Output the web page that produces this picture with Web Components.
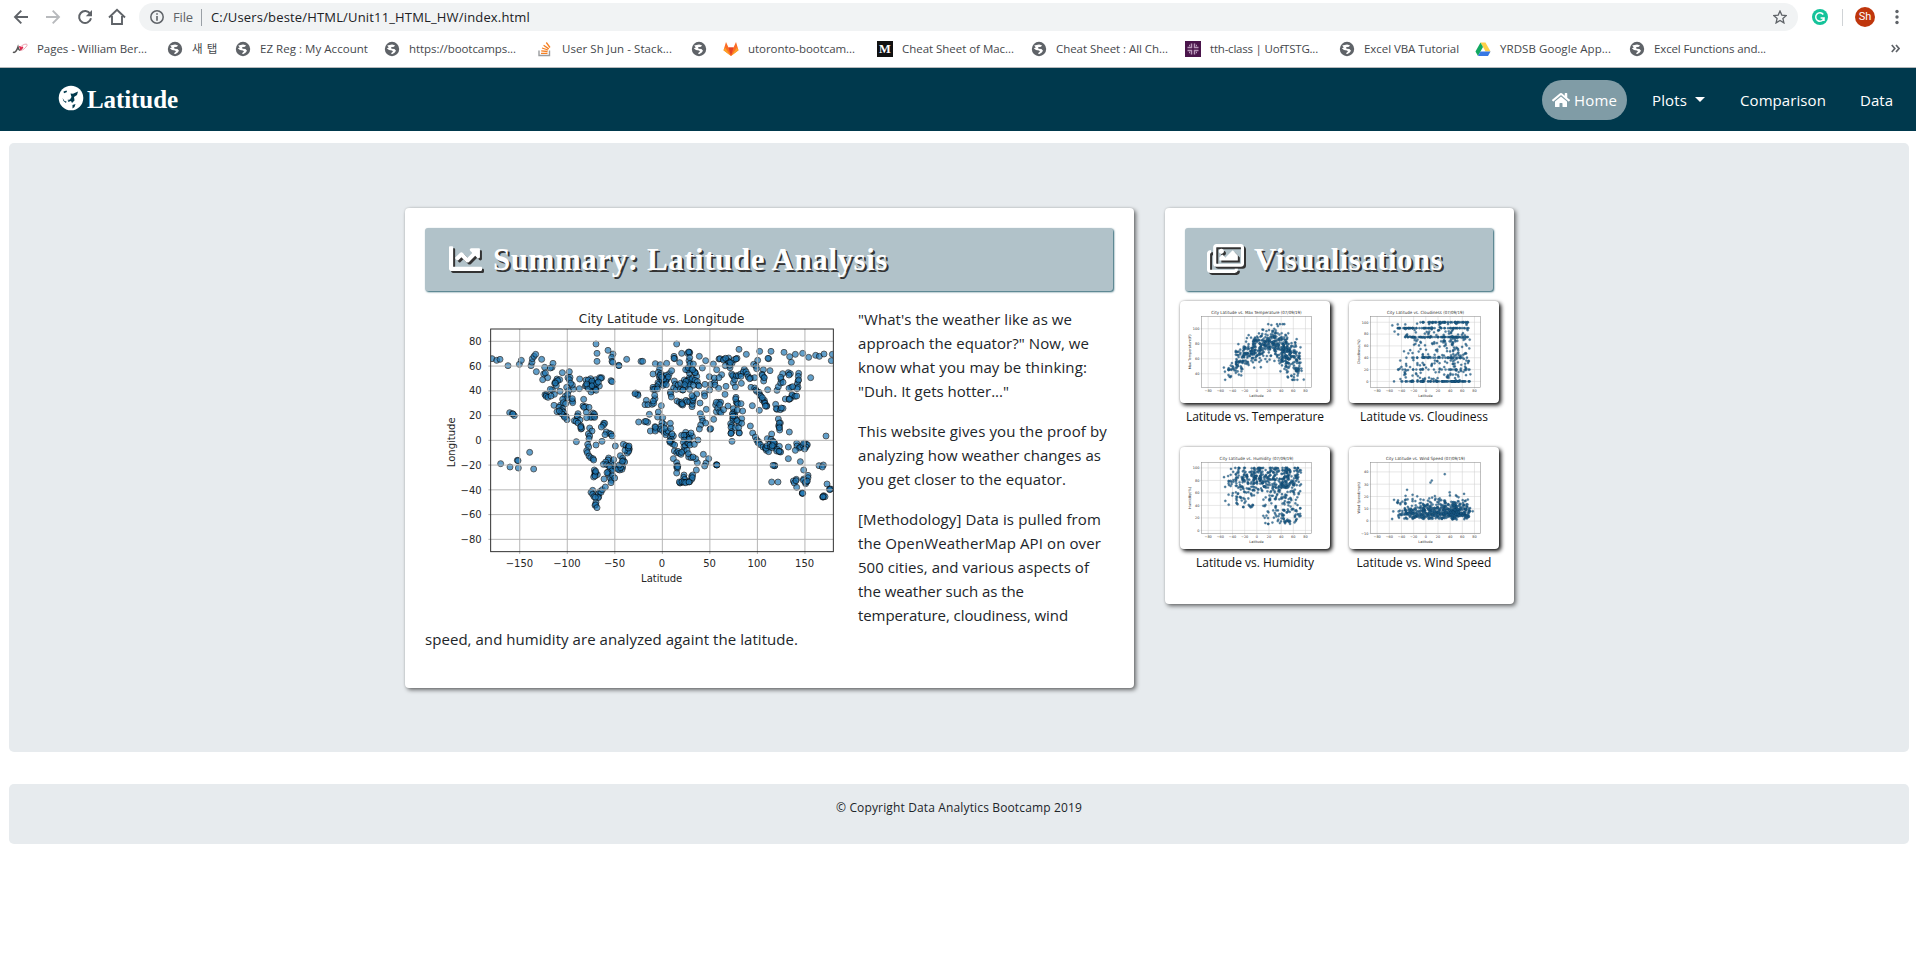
<!DOCTYPE html>
<html lang="en">
<head>
<meta charset="utf-8">
<title>Latitude</title>
<style>
body{margin:0;background:#fff;color:#212529;font-family:"Open Sans","Noto Sans","Noto Sans CJK KR",sans-serif;font-size:15px;overflow:hidden}
</style>
</head>
<body>
<app-window></app-window>

<template id="t-window">
<style>:host{display:block;height:974px}main{display:block;padding:12px 7px 0 9px}
.cols{display:grid;grid-template-columns:729px 349px;column-gap:31px;align-items:start;justify-content:start;padding-left:396px}
.jumbo{background:#e7ebee;border-radius:5px;height:544px;padding-top:65px}
footer{background:#e7ebee;border-radius:5px;height:60px;margin-top:32px;display:flex;justify-content:center;font-size:12px;line-height:48px;color:#212529}
p{margin:0 0 16px;line-height:24px}
p fit-text{display:block}
.grid{display:grid;grid-template-columns:150px 150px;column-gap:19px;row-gap:26px;margin:10px 0 0 -5px}
</style>
<browser-bar></browser-bar>
<bookmark-bar></bookmark-bar>
<site-nav></site-nav>
<main>
<section class="jumbo"><div class="cols">
<info-card style="--h:480px">
<card-title w="395"><svg slot="icon" width="33" height="33" viewBox="0 0 512 512" fill="#fff"><path d="M496 384H64V80c0-8.84-7.16-16-16-16H16C7.16 64 0 71.16 0 80v336c0 17.67 14.33 32 32 32h464c8.84 0 16-7.16 16-16v-32c0-8.84-7.16-16-16-16zM464 96H345.94c-21.38 0-32.09 25.85-16.97 40.97l32.4 32.4L288 242.75l-73.37-73.37c-12.5-12.5-32.76-12.5-45.25 0l-68.69 68.69c-6.25 6.25-6.25 16.38 0 22.63l22.62 22.62c6.25 6.25 16.38 6.25 22.63 0L192 237.25l73.37 73.37c12.5 12.5 32.76 12.5 45.25 0l96-96 32.4 32.4c15.12 15.12 40.97 4.41 40.97-16.97V112c.01-8.84-7.15-16-15.99-16z"/></svg>Summary: Latitude Analysis</card-title>
<world-plot style="margin-top:17px"></world-plot>
<div style="padding-top:16px">
<p><fit-text w="214">"What's the weather like as we</fit-text><fit-text w="231">approach the equator?" Now, we</fit-text><fit-text w="229">know what you may be thinking:</fit-text><fit-text w="151">"Duh. It gets hotter..."</fit-text></p>
<p><fit-text w="249">This website gives you the proof by</fit-text><fit-text w="243">analyzing how weather changes as</fit-text><fit-text w="208">you get closer to the equator.</fit-text></p>
<p><fit-text w="243">[Methodology] Data is pulled from</fit-text><fit-text w="243">the OpenWeatherMap API on over</fit-text><fit-text w="231">500 cities, and various aspects of</fit-text><fit-text w="166">the weather such as the</fit-text><fit-text w="210">temperature, cloudiness, wind</fit-text><fit-text w="373" style="clear:left">speed, and humidity are analyzed againt the latitude.</fit-text></p>
</div>
</info-card>
<info-card style="--h:396px">
<card-title w="189" style="padding-left:22px;gap:10px"><svg slot="icon" width="37" height="33" viewBox="0 0 576 512" fill="#fff"><path d="M480 416v16c0 26.51-21.49 48-48 48H48c-26.51 0-48-21.49-48-48V176c0-26.51 21.49-48 48-48h16v48H54a6 6 0 0 0-6 6v244a6 6 0 0 0 6 6h372a6 6 0 0 0 6-6v-10h48zm42-336H150a6 6 0 0 0-6 6v244a6 6 0 0 0 6 6h372a6 6 0 0 0 6-6V86a6 6 0 0 0-6-6zm6-48c26.51 0 48 21.49 48 48v256c0 26.51-21.49 48-48 48H144c-26.51 0-48-21.49-48-48V80c0-26.51 21.49-48 48-48h384zM264 144c0 22.091-17.909 40-40 40s-40-17.909-40-40 17.909-40 40-40 40 17.909 40 40zm-72 96l39.515-39.515c4.686-4.686 12.284-4.686 16.971 0L288 240l103.515-103.515c4.686-4.686 12.284-4.686 16.971 0L480 208v80H192v-48z"/></svg>Visualisations</card-title>
<div class="grid">
<plot-thumb kind="temp"><fit-text w="138">Latitude vs. Temperature</fit-text></plot-thumb>
<plot-thumb kind="cloud"><fit-text w="128">Latitude vs. Cloudiness</fit-text></plot-thumb>
<plot-thumb kind="humid"><fit-text w="118">Latitude vs. Humidity</fit-text></plot-thumb>
<plot-thumb kind="wind"><fit-text w="135">Latitude vs. Wind Speed</fit-text></plot-thumb>
</div>
</info-card>
</div></section>
<footer><fit-text w="246">© Copyright Data Analytics Bootcamp 2019</fit-text></footer>
</main>
</template>

<template id="t-browser">
<style>:host{display:flex;height:31px;padding:3px 0 0;align-items:flex-start;box-sizing:border-box;background:#fff}
.nav{display:flex;width:139px;height:28px;align-items:center;padding-left:13px;box-sizing:border-box;gap:16px}
.omni{display:flex;align-items:center;width:1659px;height:28px;background:#f1f3f4;border-radius:14px;box-sizing:border-box;padding:0 11px;font-size:13px;color:#202124}
.omni i{width:1px;height:17px;background:#9aa0a6;margin:0 9px 0 8px}
.file{color:#5f6368;margin-left:9px}.star{margin-left:auto}
.end{display:flex;align-items:center;height:28px}
.av{width:20px;height:20px;border-radius:50%;background:#bf360c;color:#fff;font:11px/20px Roboto,sans-serif;text-align:center}
svg{display:block;flex:none}
</style>
<div class="nav"><svg width="16" height="16" viewBox="0 0 16 16" fill="none" stroke="#5f6368" stroke-width="1.900"><path d="M15 8H2.200M8.300 1.600 2 8l6.300 6.400"/></svg><svg width="16" height="16" viewBox="0 0 16 16" fill="none" stroke="#b8babd" stroke-width="1.900"><path d="M1 8h12.800M7.700 1.600 14 8l-6.300 6.400"/></svg><svg width="16" height="16" viewBox="0 0 16 16" fill="none" stroke="#5f6368" stroke-width="2"><path d="M13.200 4.800A6 6 0 1 0 14 9.300"/><path d="M15 1v6.200H8.800z" fill="#5f6368" stroke="none"/></svg><svg style="margin-left:-1px" width="18" height="18" viewBox="0 0 18 18" fill="none" stroke="#5f6368" stroke-width="1.900"><path d="M1 9.500 9 1.800l8 7.700M4 8v8h10V8"/></svg></div>
<div class="omni"><svg width="14" height="14" viewBox="0 0 14 14"><circle cx="7" cy="7" r="6.200" fill="none" stroke="#5f6368" stroke-width="1.500"/><path d="M6.200 3.200h1.600v1.600H6.200zM6.200 6h1.600v4.800H6.200z" fill="#5f6368"/></svg><fit-text w="20" class="file">File</fit-text><i></i><fit-text w="319">C:/Users/beste/HTML/Unit11_HTML_HW/index.html</fit-text><svg class="star" width="14" height="14" viewBox="0 0 14 14" fill="none" stroke="#5f6368" stroke-width="1.300"><path d="m7 1 1.800 4.100 4.500.400-3.400 3 1 4.400L7 10.500l-3.900 2.400 1-4.400-3.400-3 4.500-.400z"/></svg></div>
<div class="end"><svg style="margin-left:14px" width="16" height="16" viewBox="0 0 16 16"><circle cx="8" cy="8" r="8" fill="#15c39a"/><path d="M11.300 5.500A4.200 4.200 0 1 0 12 9H8.600M12 9v3" fill="none" stroke="#fff" stroke-width="1.500"/></svg><i style="width:1px;height:17px;background:#d0d3d6;margin:0 12px 0 14px"></i><span class="av">Sh</span><svg style="margin-left:20px" width="4" height="16" viewBox="0 0 4 16" fill="#5f6368"><circle cx="2" cy="2.500" r="1.700"/><circle cx="2" cy="8" r="1.700"/><circle cx="2" cy="13.500" r="1.700"/></svg></div>
</template>

<template id="t-nav">
<style>:host{display:flex;height:63px;background:#00394d;color:#fff;align-items:center;box-sizing:border-box}
.brand{display:flex;align-items:center;font:bold 25px "Liberation Serif",serif;margin-left:58px;gap:3px}
.links{display:flex;align-items:center;margin-left:auto;padding-right:23px}
.pill{display:flex;align-items:center;gap:4px;background:#809ca6;border-radius:20px;height:40px;width:85px;box-sizing:border-box;padding-left:10px;margin-right:25px}
.caret{border:5px solid transparent;border-top-color:#fff;border-bottom:0;margin:0 35px 0 8px}
svg{display:block}
</style>
<div class="brand"><svg style="margin-top:-3px" width="26" height="26" viewBox="0 0 26 26"><circle cx="13" cy="13" r="12.300" fill="#fff"/><path d="m5.500 6.500 3-1 .500 1.500-3 1.200zM12.500 8.500l2.500.300 5-2.300-1 3.500-3 2 .500 3.500-2.500 2.500-1-2-3 1 .500-1.500-1.500-.500 3-.500 1.500-2.500zM4.500 13l2 3 2 .500-.500 1.500-2.500-2zM14.500 20l3-1-1 3-2 1.500z" fill="#00394d"/></svg><fit-text w="91">Latitude</fit-text></div>
<div class="links"><span class="pill"><svg width="18" height="16" viewBox="0 0 576 512" fill="#fff"><path d="M280.370 148.260L96 300.110V464a16 16 0 0 0 16 16l112.060-.290a16 16 0 0 0 15.920-16V368a16 16 0 0 1 16-16h64a16 16 0 0 1 16 16v95.640a16 16 0 0 0 16 16.050L464 480a16 16 0 0 0 16-16V300L295.670 148.260a12.190 12.190 0 0 0-15.300 0zM571.600 251.470L488 182.560V44.050a12 12 0 0 0-12-12h-56a12 12 0 0 0-12 12v72.610L318.470 43a48 48 0 0 0-61 0L4.340 251.470a12 12 0 0 0-1.600 16.900l25.500 31A12 12 0 0 0 45.150 301l235.220-193.740a12.190 12.190 0 0 1 15.300 0L530.900 301a12 12 0 0 0 16.900-1.600l25.500-31a12 12 0 0 0-1.700-16.930z"/></svg><fit-text w="43">Home</fit-text></span><fit-text w="35">Plots</fit-text><span class="caret"></span><fit-text w="86" style="margin-right:34px">Comparison</fit-text><fit-text w="33">Data</fit-text></div>
</template>

<script>
class Base extends HTMLElement{
  mount(html){ if(!this.shadowRoot){ this.attachShadow({mode:'open'}).append(html.content ? html.content.cloneNode(true) : document.createRange().createContextualFragment(html)); } }
}
const tpl=id=>document.getElementById(id);

const globe='<circle cx="8" cy="8" r="7.200" fill="#5f6368"/><path d="M3.200 4.500 8 3.500l3 .800-1 1.500-3 .500.500 1.500 3 .200 1.500 1.700-1.500 2-2.500 1.500-1-1 2-1.700-1-1L5 9 2.800 7.300l2-.800z" fill="#fff"/>';
const icons={
 globe,
 wb:'<path d="M1 11c2 1.500 4-2 5-5 1 4 2 4 4 1" fill="none" stroke="#555" stroke-width="1.500"/><path d="M7 5.500c1-1 2 0 2 1 1-2 3-1 2 .500L8.500 9.500z" fill="#e2244b"/><path d="M9 5.500c3-3 7-3 6-1s-4 5-7 5" fill="none" stroke="#e98a9c" stroke-width=".8"/>',
 so:'<path d="M2 9.500v5h10.500v-5" fill="none" stroke="#9a9c9f" stroke-width="1.400"/><path d="M4 12.300h6.500M4.200 9.800l6.400.700M5 7l6 2M6.600 4.200l5.200 3.700M9.300 1.500l3.700 5" fill="none" stroke="#f48024" stroke-width="1.300"/>',
 gitlab:'<path d="M8 15 .500 9.300 3 1l2.500 5.500h5L13 1l2.500 8.300z" fill="#fc6d26"/><path d="M8 15 5.500 6.500h5z" fill="#e24329"/><path d="M8 15 .500 9.300 2 6.500zM8 15l7.500-5.700L14 6.500z" fill="#fca326"/>',
 medium:'<rect width="16" height="16" fill="#111"/><text x="8" y="12.300" text-anchor="middle" font-family="Liberation Serif,serif" font-weight="bold" font-size="12.500" fill="#fff">M</text>',
 slack:'<rect width="16" height="16" fill="#4a154b"/><path d="M6.500 2.500v4h-4M9.500 2.500v4h4M6.500 13.500v-4h-4M9.500 13.500v-4h4M4 4.500h1M11 4.500h1M4 11.500h1M11 11.500h1" fill="none" stroke="#b897b9" stroke-width="1.500"/>',
 drive:'<path d="M5.500 1.500h5l5 9h-5z" fill="#ffcf48"/><path d="M5.500 1.500 8 6l-5 9-2.500-4.500z" fill="#11a861"/><path d="M5.500 10.500h10L13 15H3z" fill="#3777e3"/>'};
customElements.define('bookmark-item',class extends Base{
 connectedCallback(){const w=this.getAttribute('w');
  this.mount(`<style>:host{display:flex;align-items:center;gap:9px;flex:none}svg{display:block;flex:none}fit-text{margin-top:-1px}</style><svg width="16" height="16" viewBox="0 0 16 16">${icons[this.getAttribute('icon')]}</svg>`+(w?`<fit-text w="${w}">${this.getAttribute('label')}</fit-text>`:''));}
});
customElements.define('bookmark-bar',class extends Base{
 connectedCallback(){
  const b=[['wb',155,110,'Pages - William Ber...'],['globe',68,26,'새 탭'],['globe',149,108,'EZ Reg : My Account'],['globe',153,107,'https://bootcamps...'],['so',154,110,'User Sh Jun - Stack...'],['globe',32,0,''],['gitlab',154,107,'utoronto-bootcam...'],['medium',154,112,'Cheat Sheet of Mac...'],['globe',154,112,'Cheat Sheet : All Ch...'],['slack',154,108,'tth-class | UofTSTG...'],['globe',136,95,'Excel VBA Tutorial'],['drive',154,111,'YRDSB Google App...'],['globe',154,112,'Excel Functions and...']];
  this.mount(`<style>:host{display:flex;height:37px;box-sizing:border-box;border-bottom:1px solid #b6b9bb;align-items:center;padding:0 16px 1px 12px;font-size:11.500px;color:#45484c;background:#fff}.more{margin-left:auto}</style>`+b.map(i=>`<bookmark-item style="width:${i[1]}px" icon="${i[0]}" w="${i[2]||''}" label="${i[3]}"></bookmark-item>`).join('')+'<svg class="more" width="9" height="9" viewBox="0 0 9 9" fill="none" stroke="#5f6368" stroke-width="1.700"><path d="m.800 1 3 3.500-3 3.500M5 1l3 3.500L5 8"/></svg>');}
});
customElements.define('browser-bar',class extends Base{connectedCallback(){this.mount(tpl('t-browser'));}});
customElements.define('site-nav',class extends Base{connectedCallback(){this.mount(tpl('t-nav'));}});
customElements.define('info-card',class extends Base{connectedCallback(){this.mount(`<style>:host{display:block;box-sizing:border-box;height:var(--h);background:#fff;border-radius:4px;padding:20px 21px 20px 20px;box-shadow:2px 2px 4px rgba(0,0,0,.550),0 0 2px rgba(0,0,0,.150)}</style><slot></slot>`);}});
customElements.define('card-title',class extends Base{connectedCallback(){this.mount(`<style>:host{display:flex;align-items:center;gap:11px;height:63px;box-sizing:border-box;padding-left:24px;background:#b1c2c9;border-radius:3px;box-shadow:1px 1px 2px #27606f;color:#fff;font:bold 31px "Liberation Serif",serif;text-shadow:2px 2px 0 #333;letter-spacing:0}::slotted(svg){filter:drop-shadow(2px 2px 0 #333);display:block;flex:none;margin-top:-2px}</style><slot name="icon"></slot><fit-text w="${this.getAttribute('w')}">${this.textContent.trim()}</fit-text>`);}});

/* city markers, in plot pixels: x = 697 + 2.85*lon, y = 421 - 3.71*lat */
const pts=`186,176 200,181 210,178 234,197 268,193 274,181 303,197 306,187 307,176 312,169 317,163 335,178 319,215 344,202 366,202 369,190 361,204 498,132 501,160 501,184 534,151 549,162 545,172 546,184 548,187 566,196 567,197 590,178 633,184 638,184
338,239 341,222 353,233 346,219 397,218 418,215 381,237 377,245 374,250 389,239 383,242 414,233 420,232 418,239 449,237 468,240 482,236 497,239 509,233 515,233 512,235 543,242 546,245 466,258 470,258 483,247 489,249 493,256 481,258 497,262 508,258 488,270 483,276 475,266 448,266 430,267 427,255 422,250 410,262 416,272 390,274 367,270 373,283 379,257 376,249 345,284 349,284 348,289 354,292 363,288 361,268 496,267 491,251 475,240 486,243 486,257 500,250 505,246 498,271 470,252
406,289 412,293 398,298 413,283 427,303 428,308 427,296 461,298 372,316 391,316 400,308 407,311 387,322 398,326 396,332 381,335 393,338 400,336 408,349 402,348 411,359 396,342 404,352 388,333 459,318 467,320 462,322 477,322 469,337 489,339 494,347 493,342 490,351 485,351 482,352 470,353 494,352 444,341 442,352 442,348 450,360 433,362 438,364 444,369 453,378 453,387 455,385 452,381 479,384 486,393 475,402 479,408 477,416 521,370 524,370 520,376 514,381 529,396 538,400 543,402 546,408 525,404 516,424 498,435 473,433 476,441 470,452 472,458 477,468 482,473 489,476 491,480
439,425 556,438 580,433 588,437 595,441 598,447 595,452 592,459 596,454 585,451 595,444 597,438 571,467 578,475 580,482 584,486 575,493 578,501 576,508 569,510 562,504 557,504 550,496 547,506 543,488 551,479 536,474 534,480 527,486 520,493 530,494 537,497 540,503 545,513 534,516 535,523 531,518 541,535 545,541 543,548 548,527 554,534 522,537 564,508 572,503 568,495 577,484 493,510 495,517 494,524 502,524 496,519 491,531 495,528 497,514
488,571 483,577 488,583 492,590 506,590 505,582 509,575 513,577 517,569 526,561 498,607 495,616 497,614 501,623 505,593 496,592 239,338 247,341 253,347 249,342 212,491 240,501 262,481 264,482 265,504 299,457 311,507
740,132 773,160 755,160 778,157 779,158 776,156 732,169 734,176 732,175 749,188 777,182 779,173 808,169 827,182 850,192 817,204 867,177 870,176 883,177 880,180 896,174 894,183 906,190 913,179 921,175 918,177 887,175 897,188 900,203 886,197 899,196 901,188 927,148 949,163 989,154 1023,154 1016,176 1014,175 1062,157 1096,163 1118,160 1136,172 1157,166 1168,169 1182,162 1207,163 1204,182 1079,170 1084,187 971,193 983,181
676,191 691,194 689,206 710,190 669,222 685,217 692,221 688,231 690,226 692,239 684,248 686,253 680,260 669,262 669,268 674,268 682,267 698,236 703,228 706,240 703,251 696,242 702,249 711,233 718,221 725,212 709,226 712,237 707,243 699,256 709,254 702,236 715,231 695,231 733,243 736,253 731,264 721,276 722,281 724,291 739,268 744,255 751,267 758,270 752,250 763,240 766,248 772,248 775,240 778,233 782,240 784,246 779,239 768,259 776,253 768,244 787,236 778,219 773,210 767,209 775,203 786,208 780,191 790,192 793,215 796,219 800,229 795,241 802,245 804,255 807,258 795,218 788,209 790,256 764,254 825,253 823,280 824,288 843,253 839,270 838,230 854,246 855,255 853,234 860,209 875,224 867,233 866,265 888,259 910,248 911,230 905,222 908,227 914,239 916,261 919,227 925,227 932,222 943,208 940,216 948,215 952,223 955,231 962,234 974,233 959,236 933,229 934,250 978,198 980,206 1000,209 996,223 1001,232 1001,243 1020,212 997,226 1003,233
741,303 748,307 755,306 754,313 758,315 757,311 768,301 772,305 779,305 786,320 787,313 789,303 788,299 800,282 791,293 786,287 759,270 779,268
617,279 623,282 624,286 615,281 649,301 645,314 654,314 666,313 671,310 675,296 674,286 670,303 694,317 658,343 626,366 644,365 653,367 648,364 661,393 675,380 678,388 676,393 685,336 683,351 698,353 702,373 696,368 693,379 691,388 697,391 702,397 707,404 709,397 714,393 722,385 721,370 704,385 676,382 721,412 730,408 724,418 722,425 728,432 720,427 734,435 719,423 726,402 755,406 767,397 768,406 768,412 777,405 779,412 787,409 783,399 762,406 763,420 760,427 762,440 766,437 773,429 776,430 780,435 793,433 804,420 777,418
733,453 740,458 744,454 748,460 753,463 762,452 755,457 771,451 776,471 783,473 775,461 730,476 740,488 743,497 740,500 742,505 743,500 740,519 762,525 761,532 764,538 752,548 750,549 748,546 756,545 762,547 773,545 779,545 785,538 785,529 788,525 799,510 802,488 797,476 789,471 820,463 828,489 824,498 836,476 860,495 859,494 861,495 767,548 777,546 787,533
816,353 818,363 812,375 827,369 808,387 840,388 842,386 851,358 829,328 811,341 810,309 857,315 866,307 872,307 859,335 863,324 869,335 873,338 881,329 894,318 885,283 918,292 919,307 921,308 923,311 933,311 917,297 910,326 911,337 914,341 907,342 908,355 909,361 902,371 905,377 903,382 905,395 903,400 903,400 906,424 917,356 914,348 922,330 938,333 935,356 927,368 935,370 921,362 927,398 928,399 916,383 926,383 909,348 859,307 869,314
963,262 974,264 978,270 980,274 987,277 990,285 993,289 997,300 1003,301 1003,307 1005,310 1010,317 1010,319 1006,318 997,293 967,317 988,331 1013,269 1041,271 1045,260 1052,249 1053,238 1059,247 1058,221 1052,232 1075,218 1081,221 1077,225 1106,220 1105,229 1104,243 1102,252 1104,262 1101,266 1083,262 1077,265 1142,233 1106,240 1088,260 1037,313 1041,328 1039,326 1051,329 1059,325 1054,324 1066,297 1077,298 1082,295 1087,287 1086,284 1095,289 1100,288 1078,297 1045,357 1051,369 1046,377 1048,380 1049,390 1048,369 1048,383 1078,396 961,378 968,399 1025,402 1188,408
976,411 980,420 986,425 984,428 991,434 999,441 1006,444 1009,451 1016,455 1008,445 1011,437 1020,432 1029,434 1034,430 1012,416 1023,418 1029,424 1022,441 1027,443 1032,436 1031,427 1027,437 1048,439 1041,448 1040,453 1049,455 1052,456 1047,454 1075,441 1075,476 1100,430 1101,438 1108,444 1096,451 1112,441 1119,436 1126,430 1130,435 1132,434 1128,441 1121,430 1124,447 1111,485 1121,510 1134,526 1134,533 1121,537 1130,545 1127,551 1120,541 1126,547 1132,543 1099,538 1090,543 1093,549 1100,562 1117,580 1117,579 1118,580 1098,542 1034,497 1034,497 1029,496 1025,546 1044,546 1167,497 1180,495 1177,501 1191,552 1199,567 1202,567 1181,587 1178,591 1180,591 1185,590 1179,590 1199,569`.trim().split(/\s+/).map(s=>s.split(',').map(Number));

customElements.define('world-plot',class extends Base{
 connectedCallback(){
  let g='',t='';
  const m=v=>String(v).replace('-','−');
  for(const v of [-150,-100,-50,0,50,100,150]){const x=697+2.852*v;g+=`<path d="M${x} 87V762"/>`;t+=`<text x="${x-1}" y="801" text-anchor="middle">${m(v)}</text>`;}
  for(const v of [-80,-60,-40,-20,0,20,40,60,80]){const y=421-3.713*v;g+=`<path d="M175 ${y}H1210"/>`;t+=`<text x="155" y="${y+11}" text-anchor="end">${m(v)}</text>`;}
  this.mount(`<style>:host{display:block;float:left;width:433px;height:312px}svg{display:block}text{font-family:"DejaVu Sans",sans-serif;font-size:30px;fill:#262626}</style>
<svg width="433" height="312" viewBox="-15 24 1299 936"><defs><clipPath id="c"><rect x="182" y="87" width="1028" height="668"/></clipPath></defs>
<g clip-path="url(#c)" fill="#1f77b4" stroke="#000" stroke-width="2.600" >${pts.map(p=>`<circle cx="${p[0]}" cy="${p[1]}" r="9" opacity=".7"/>`).join('')}</g>
<g stroke="#b0b0b0" stroke-width="2.800" fill="none">${g}</g><rect x="182" y="87" width="1028" height="668" fill="none" stroke="#222" stroke-width="2.800"/>${t}
<text x="695" y="70" text-anchor="middle" style="font-size:36px" textLength="497">City Latitude vs. Longitude</text><text x="695" y="845" text-anchor="middle">Latitude</text><text transform="translate(76 427) rotate(-90)" text-anchor="middle">Longitude</text></svg>`);}
});

customElements.define('plot-thumb',class extends Base{
 connectedCallback(){
  const k=this.getAttribute('kind');
  let seed={temp:7,cloud:21,humid:5,wind:99}[k];
  const R=()=>{seed=(seed*1664525+1013904223)%4294967296;return seed/4294967296;};
  const N=()=>(R()+R()+R()+R()-2)*1.7;
  const C={temp:['Max Temperature (07/09/19)',272,'Max Temperature(F)',[40,60,80,100],[219,83.500],[40,100]],cloud:['Cloudiness (07/09/19)',232,'Cloudiness(%)',[0,20,40,60,80,100],[242,64],[0,100]],humid:['Humidity (07/09/19)',222,'Humidity(%)',[0,20,40,60,80,100],[251,63],[0,100]],wind:['Wind Speed (07/09/19)',238,'Wind Speed(mph)',[-10,0,10,20,30,40],[260,75],[-10,40]]}[k];
  if(k==='wind')C[4]=[260,75];
  const Y=v=>C[4][0]+(v-C[5][0])*(C[4][1]-C[4][0])/(C[5][1]-C[5][0]);
  const X=l=>230+1.831*l;
  const lerp=l=>{const a=[[-56,37],[-45,46],[-35,54],[-20,64],[0,75],[20,82],[30,82],[40,74],[50,67],[60,62],[70,53],[80,42]];for(let i=1;i<a.length;i++)if(l<=a[i][0]){const p=a[i-1],q=a[i];return p[1]+(q[1]-p[1])*(l-p[0])/(q[0]-p[0]);}return 42;};
  let d='',i=0;
  for(const p of pts){const l=(421-p[1])/3.713+(R()-.5)*2;let v;
   if(i++%5===2||(l>74&&k!=='temp'&&R()<.5))continue;
   if(k==='temp'){v=lerp(l)+N()*(l>30?14:l>0?11:9);v=Math.max(32,Math.min(106,v));}
   else if(k==='cloud'){const r=R();v=r<.170?0:r<.290?75:r<.400?(l<-10?90:100):r<.470?90:r<.520?40:r<.570?20:R()*100;if(v<60&&R()<.250)v=l>35||l<0?v:R()<.5?100:75;}
   else if(k==='humid'){const r=R();v=r<.460?68+R()*32:(l<10?36+R()*54:10+R()*85);if(l>-6&&l<8&&v<55)v=75+R()*25;if(R()<.050)v=100;}
   else {v=.5+Math.abs(N())*6.500+R()*5;if(R()<.060)v+=8;v=Math.min(v,26);}
   d+=`<circle cx="${X(l).toFixed(1)}" cy="${Y(v).toFixed(1)}" r="3.400"/>`;}
  if(k==='wind')d+=[[287,82],[248,101],[244,107]].map(q=>`<circle cx="${q[0]}" cy="${q[1]}" r="3.400"/>`).join('');
  let g='',t='';const m=v=>String(v).replace('-','−');
  for(const v of [-80,-60,-40,-20,0,20,40,60,80]){const x=X(v);g+=`<path d="M${x} 46V264"/>`;t+=`<text x="${x}" y="274" text-anchor="middle">${m(v)}</text>`;}
  for(const v of C[3]){g+=`<path d="M60 ${Y(v)}H395"/>`;t+=`<text x="57" y="${Y(v)+4}" text-anchor="end">${m(v)}</text>`;}
  this.mount(`<style>:host{display:block;text-align:center;font-size:12px;line-height:18px;color:#111}.img{display:block;width:150px;height:102px;border-radius:4px;background:#fff;box-shadow:2px 2px 4px #000,0 0 2px rgba(0,0,0,.200)}text{font-family:"DejaVu Sans",sans-serif;font-size:10.500px;fill:#333}.l{display:flex;justify-content:center;margin-top:5px;height:18px;margin-bottom:-5px}:host([kind]){height:120px}circle{opacity:.78}</style>
<svg class="img" viewBox="0 0 449 307"><g stroke="#d2d2d2" stroke-width="1.600">${g}</g><g fill="#1c5f8e" stroke="#0d3550" stroke-width=".8">${d}</g><rect x="64" y="46" width="331" height="214" fill="none" stroke="#888" stroke-width="1.600"/>${t}
<text x="229" y="39" text-anchor="middle" style="font-size:13px" textLength="${C[1]}" lengthAdjust="spacingAndGlyphs">City Latitude vs. ${C[0]}</text><text x="229" y="288" text-anchor="middle">Latitude</text><text transform="translate(31 153) rotate(-90)" text-anchor="middle">${C[2]}</text></svg><div class="l"><slot></slot></div>`);}
});

/* single line of text tracked to a set width */
customElements.define('fit-text',class extends Base{
 connectedCallback(){
  this.mount('<style>:host{display:block;white-space:nowrap}span{display:inline-block}</style><span><slot></slot></span>');
  const s=this.shadowRoot.querySelector('span');
  this.fit=()=>{const w=+this.getAttribute('w');s.style.letterSpacing='0';const c=s.getBoundingClientRect().width;const n=this.textContent.length;if(c&&w)s.style.letterSpacing=((w-c)/n).toFixed(4)+'px';};
  this.fit();
 }
});
customElements.define('app-window',class extends Base{connectedCallback(){this.mount(tpl('t-window'));this.shadowRoot.querySelectorAll('fit-text').forEach(e=>e.fit&&e.fit());}});
</script>
</body>
</html>
